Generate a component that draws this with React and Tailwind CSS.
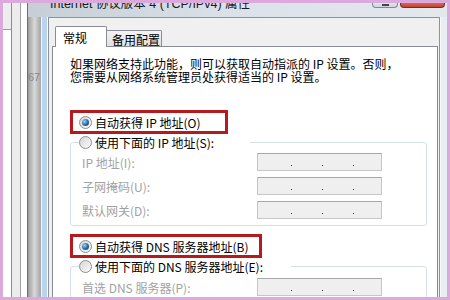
import React from "react";

const cjk = "font-['Noto_Sans_CJK_SC',sans-serif]";

function Radio({ on }) {
  return (
    <span className="w-[13px] h-[13px] rounded-full border border-[#8e8f8f] bg-gradient-to-br from-[#d6d6d6] to-[#fbfbfb] flex items-center justify-center shrink-0">
      {on && (
        <span className="w-[7px] h-[7px] rounded-full bg-[radial-gradient(circle_at_35%_35%,#9fd0f5,#23679f_55%,#143c63)]" />
      )}
    </span>
  );
}

function IpField() {
  return (
    <div className="w-[125px] h-[18px] border border-[#c6c6c6] border-t-[#a8a8a8] bg-[#efefef] flex items-end pb-[4px] pl-[33px] gap-[30px]">
      <span className="w-px h-px bg-[#333]" />
      <span className="w-px h-px bg-[#333]" />
      <span className="w-px h-px bg-[#333]" />
    </div>
  );
}

function FieldRow({ label }) {
  return (
    <div className="flex items-center h-[18px]">
      <span className="w-[175px] text-[#a2a2a2]">{label}</span>
      <IpField />
    </div>
  );
}

function RedBox({ width, children }) {
  return (
    <div
      className={`${width} h-[24px] border-[3px] border-[#b51b1e] flex items-center pl-[6px] gap-[3px] whitespace-nowrap`}
    >
      <Radio on />
      <span>{children}</span>
    </div>
  );
}

function Group({ legendWidth, legend, children }) {
  return (
    <fieldset className="w-[357px] border border-[#d5dfe5] rounded-[3px] p-0">
      <legend className={`${legendWidth} ml-[8px] h-[13px] flex items-center gap-[3px] whitespace-nowrap`}>
        <Radio />
        <span>{legend}</span>
      </legend>
      {children}
    </fieldset>
  );
}

export default function App() {
  return (
    <div className={`relative w-[450px] h-[300px] overflow-hidden bg-white text-[12px] leading-[13px] text-black ${cjk}`}>
      <div className="flex h-full">
        {/* windows behind the dialog */}
        <div className="w-[11px] flex flex-col">
          <div className="h-[30px] bg-[#ededed] border-b border-[#9a9a9a]" />
          <div className="flex-1 bg-white" />
        </div>
        <div className="w-px bg-[#8c8c8c]" />
        <div className="w-[8px] bg-[#ececec]" />
        <div className="w-px bg-[#a0a0a0]" />
        <div className="w-[6px] bg-white" />
        <div className="w-px bg-[#6e6e6e]" />

        {/* dialog */}
        <div className="flex-1 flex flex-col">
          <div className="h-[17px] flex bg-gradient-to-r from-[#c6ced6] via-[#dbe2e9] to-[#e3e8ed]">
            <span className="ml-[22px] -mt-[3px] text-[12.5px] leading-[14px] text-[#1b1b1b] whitespace-nowrap font-['Liberation_Sans','Noto_Sans_CJK_SC',sans-serif]">
              Internet 协议版本 4 (TCP/IPv4) 属性
            </span>
            <div className="ml-auto mr-[5px] flex gap-[2px]">
              <div className="w-[26px] h-[8px] rounded-b-[4px] border border-t-0 border-[#7f8893] bg-gradient-to-b from-[#e9eef3] to-[#cdd6df] flex justify-center items-end pb-[1px]">
                <span className="w-[7px] h-[2px] bg-[#444]" />
              </div>
              <div className="w-[45px] h-[8px] rounded-b-[4px] border border-t-0 border-[#7a2a22] bg-gradient-to-b from-[#e2846f] to-[#c4402f]" />
            </div>
          </div>

          <div className="flex-1 flex min-h-0">
            {/* left frame */}
            <div className="w-[13px] bg-gradient-to-r from-[#9c9c9c] via-[#d9d9d9] to-[#a3a3a3] pt-[55px] overflow-hidden">
              <span className="block text-[11px] leading-none text-[#858b92] font-['Liberation_Sans',sans-serif]">67</span>
            </div>
            <div className="w-px bg-[#f4f6f8]" />
            <div className="w-[5px] bg-[#b9d4ee]" />
            <div className="w-px bg-white" />

            {/* client area */}
            <div className="w-[392px] border border-b-0 border-[#8d9399] bg-[#f0f0f0] pl-[3px] pr-px pt-[7px] flex flex-col min-h-0">
              <div className="flex items-end pl-[3px] h-[21px]">
                <div className="relative z-10 w-[52px] h-[21px] -mb-px border border-b-0 border-[#898c95] bg-white rounded-t-[2px] pl-[7px] pt-[4px]">
                  常规
                </div>
                <div className="w-[55px] h-[16px] border border-l-0 border-b-0 border-[#898c95] bg-gradient-to-b from-[#f3f3f3] to-[#e1e1e1] rounded-tr-[2px] pl-[5px] pt-[2px]">
                  备用配置
                </div>
              </div>

              {/* tab page */}
              <div className="flex-1 border border-b-0 border-[#898c95] bg-white pl-[17px] flex flex-col overflow-hidden">
                <div className="mt-[10px] whitespace-nowrap">
                  <div>如果网络支持此功能，则可以获取自动指派的 IP 设置。否则，</div>
                  <div>您需要从网络系统管理员处获得适当的 IP 设置。</div>
                </div>

                <div className="mt-[27px]">
                  <RedBox width="w-[158px]">自动获得 IP 地址(O)</RedBox>
                </div>

                <div className="mt-[2px]">
                  <Group legendWidth="w-[171px]" legend="使用下面的 IP 地址(S):">
                    <div className="pl-[11px] pt-[4px] pb-[6px] flex flex-col gap-[6px]">
                      <FieldRow label="IP 地址(I):" />
                      <FieldRow label="子网掩码(U):" />
                      <FieldRow label="默认网关(D):" />
                    </div>
                  </Group>
                </div>

                <div className="mt-[8px]">
                  <RedBox width="w-[192px]">自动获得 DNS 服务器地址(B)</RedBox>
                </div>

                <div className="mt-[2px]">
                  <Group legendWidth="w-[212px]" legend="使用下面的 DNS 服务器地址(E):">
                    <div className="pl-[11px] pt-[5px] pb-[6px] flex flex-col gap-[6px]">
                      <FieldRow label="首选 DNS 服务器(P):" />
                      <FieldRow label="备用 DNS 服务器(A):" />
                    </div>
                  </Group>
                </div>
              </div>
            </div>

            {/* right frame */}
            <div className="flex-1 bg-[#e8edf2] border-l border-[#f8f8f8]" />
          </div>
        </div>
      </div>

      {/* photo border */}
      <div className="absolute inset-0 border-[3px] border-[#dba9dc] pointer-events-none" />
    </div>
  );
}
